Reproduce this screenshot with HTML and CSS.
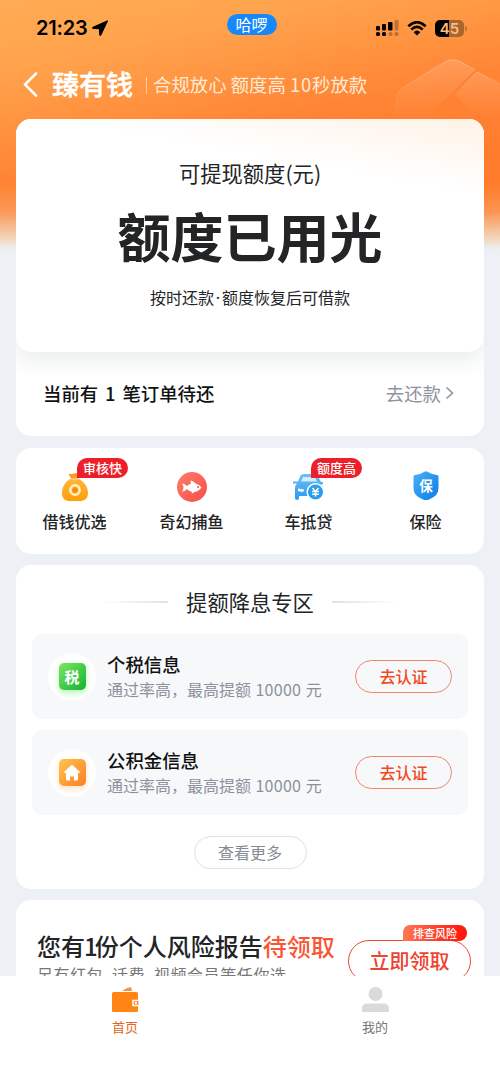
FILE: index.html
```html
<!DOCTYPE html>
<html lang="zh-CN">
<head>
<meta charset="utf-8">
<title>臻有钱</title>
<link rel="stylesheet" href="styles.css">
</head>
<body>
<div class="screen">
  <header class="top">
    <svg class="emblem" width="105" height="64" viewBox="0 0 105 64">
      <defs>
        <linearGradient id="em" x1="0" y1="0" x2="0" y2="1"><stop offset="0" stop-color="#fff" stop-opacity=".16"/><stop offset="1" stop-color="#fff" stop-opacity="0"/></linearGradient>
        <linearGradient id="edge" x1="0" y1="0" x2="0" y2="1"><stop offset="0" stop-color="#ffc596" stop-opacity=".6"/><stop offset="1" stop-color="#ffc596" stop-opacity="0"/></linearGradient>
      </defs>
      <path d="M0 60V46Q0 33 9 28L48 4Q57-2 66 3L92 17 38 52 31 60Z" fill="none"/>
      <path d="M0 60V46Q0 33 9 28L48 4Q57-2 66 3L80 11 38 52 31 60Z" fill="url(#em)"/>
      <path d="M.5 50Q0 33 9 28L48 4Q57-2 66 3L80 11" fill="none" stroke="url(#edge)"/>
      <path d="M60 35 82 13 105 25V60H82Z" fill="url(#em)"/>
      <path d="M60 35 82 13 105 25" fill="none" stroke="url(#edge)"/>
    </svg>
    <div class="status">
      <div class="clock">21:23
        <svg width="16" height="16" viewBox="0 0 16 16"><path d="M15.600.8 1 7.200c-.8.4-.6 1.300.2 1.300l6.200.2.2 6.100c0 .9.9 1 1.300.2Z" fill="#000" stroke="#000"/></svg>
      </div>
      <div class="island">哈啰</div>
      <div class="signals">
        <svg width="23" height="16" viewBox="0 0 23 16">
          <g><rect x="0" y="6" width="4" height="4.500" rx="1"/><rect x="6" y="4" width="4" height="6.500" rx="1"/><rect x="12" y="2" width="4.500" height="8.500" rx="1"/><rect x="18.500" y="0" width="4" height="10.500" rx="1" opacity=".25"/></g>
          <rect x="0" y="12" width="4" height="4" rx="1.500"/><rect x="6" y="12" width="4" height="4" rx="1.500"/><rect x="12.500" y="12" width="4" height="4" rx="1.500" opacity=".25"/><rect x="18.500" y="12" width="4" height="4" rx="1.500" opacity=".25"/>
        </svg>
        <svg class="wifi" width="20" height="15" viewBox="0 0 20 15"><path d="M1.300 5.300Q10-3 18.700 5.300M4.300 8.600Q10 3.200 15.700 8.600" fill="none" stroke="#000" stroke-width="2.600"/><path d="M6.700 11.200Q10 8 13.300 11.200L10 14.600Z"/></svg>
        <div class="battery">45</div><i class="battery-tip"></i>
      </div>
    </div>
    <div class="brand">
      <svg class="back" width="15" height="25" viewBox="0 0 15 25"><path d="M13 1.500 2 12.500 13 23.500" fill="none" stroke="#fff" stroke-width="2.500" stroke-linecap="round"/></svg>
      <h1>臻有钱</h1>
      <i class="rule"></i>
      <span class="slogan">合规放心 额度高 <span class="ten">10</span>秒放款</span>
    </div>
  </header>

  <main class="content">
    <section class="card quota">
      <div class="quota-main">
        <div class="quota-label">可提现额度(元)</div>
        <div class="quota-value">额度已用光</div>
        <div class="quota-note">按时还款<span class="dot">·</span>额度恢复后可借款</div>
      </div>
      <div class="orders">
        <span class="orders-text">当前有 <span class="count">1</span> 笔订单待还</span>
        <span class="repay">去还款<svg width="9" height="14" viewBox="0 0 9 14"><path d="M1.500 1.500 7.500 7 1.500 12.500" fill="none" stroke="#8d949d" stroke-width="1.600"/></svg></span>
      </div>
    </section>

    <nav class="card menu">
      <a class="entry">
        <svg width="32" height="32" viewBox="0 0 32 32">
          <defs><linearGradient id="bag" x1="0" y1="0" x2="0" y2="1"><stop offset="0" stop-color="#ffb53a"/><stop offset="1" stop-color="#ff9f0a"/></linearGradient></defs>
          <path d="M9.500 2.500q3 1 5 0 4-1 6 1l-2 5h-6Z" fill="#f79a26"/>
          <path d="M11 8h9c5 2.500 9 8 9 14 0 6-4 8-8 8H11c-5 0-8-2-8-8 0-6 3-11 8-14Z" fill="url(#bag)"/>
          <path d="M12 8h8" stroke="#ffe2a8" stroke-width="1"/>
          <circle cx="16" cy="19" r="4.700" fill="none" stroke="#fff2c8" stroke-width="2.400"/><path d="m16 16 3 3-3 3-3-3Z" fill="#f28c05"/>
        </svg>
        <span>借钱优选</span><b class="tag">审核快</b>
      </a>
      <a class="entry">
        <svg width="32" height="32" viewBox="0 0 32 32">
          <defs><linearGradient id="fish" x1="0" y1="0" x2="1" y2="1"><stop offset="0" stop-color="#ff7c68"/><stop offset="1" stop-color="#f64e4b"/></linearGradient></defs>
          <circle cx="16" cy="16" r="15" fill="url(#fish)"/>
          <path d="M6 12.500q3 0 5 2.500 2-2 4-2.500-.5-2-.5-3 3 .5 5 3 4 1 6 4-3 4-6.500 4.300l-3 1.700q0-1-.5-2-3-.5-4.500-2.500-2 2.500-5 2.500 1.500-2 1.500-4-.2-2-1.500-4Z" fill="#fff"/><circle cx="22" cy="16" r="1" fill="#f7574f"/>
        </svg>
        <span>奇幻捕鱼</span>
      </a>
      <a class="entry">
        <svg width="32" height="32" viewBox="0 0 32 32">
          <defs><linearGradient id="blue" x1="0" y1="0" x2="0" y2="1"><stop offset="0" stop-color="#6fbff6"/><stop offset="1" stop-color="#2a9bf0"/></linearGradient></defs>
          <path d="M7.500 4.500Q8.500 3 11 3h10q2.500 0 3.500 1.500L28 11h2v2h-1.500q1.500 2 1.500 6v6H6v2q0 2-2 2t-2-2V17q0-3 2-4.500H0v-2h5Z" fill="url(#blue)"/>
          <path d="M10 6h12l2 4.500H8Z" fill="#d4ecfc"/><path d="m5 17.500 6 1q0 2.500-2 2.500l-4-1Z" fill="#fff"/>
          <circle cx="22.500" cy="21" r="8.300" fill="#2c9df1" stroke="#fff" stroke-width="1.500"/>
          <path d="m19.500 17 3 3.500 3-3.500M19 20.500h7m-7 2.700h7M22.500 20.500v5" fill="none" stroke="#fff" stroke-width="1.400"/>
        </svg>
        <span>车抵贷</span><b class="tag">额度高</b>
      </a>
      <a class="entry">
        <svg width="32" height="32" viewBox="0 0 32 32">
          <defs><linearGradient id="shield" x1="0" y1="0" x2="1" y2="1"><stop offset="0" stop-color="#4cb0f6"/><stop offset="1" stop-color="#087ee5"/></linearGradient></defs>
          <path d="M14.500.8q1.500-1 3 0 4 2.700 9.500 3.200 1.500 0 1.500 2v11q0 8-9.500 11.500-3 1-6 0Q3.500 25 3.500 17V6q0-2 1.500-2 5.500-.5 9.500-3.200Z" fill="url(#shield)"/>
          <text class="shield-text" x="16" y="20">保</text>
        </svg>
        <span>保险</span>
      </a>
    </nav>

    <section class="card boost">
      <div class="boost-title"><i></i><h2>提额降息专区</h2><i></i></div>
      <div class="item">
        <div class="disc"><div class="tile green">税</div></div>
        <div class="info"><h3>个税信息</h3><p>通过率高，最高提额 <span class="num">10000</span> 元</p></div>
        <button class="verify">去认证</button>
      </div>
      <div class="item">
        <div class="disc"><div class="tile orange"><svg width="18" height="18" viewBox="0 0 18 18"><path d="M8 1.500q1-1 2 0l6.500 6q1 1.500-1 1.500h-.5v6q0 1.500-1.500 1.500H11v-4H7v4H4.500Q3 16.500 3 15V9h-.5q-2 0-1-1.500Z" fill="#fff"/></svg></div></div>
        <div class="info"><h3>公积金信息</h3><p>通过率高，最高提额 <span class="num">10000</span> 元</p></div>
        <button class="verify">去认证</button>
      </div>
      <button class="more">查看更多</button>
    </section>

    <section class="card promo">
      <div class="promo-text"><h2>您有<span class="one">1</span>份个人风险报告<em>待领取</em></h2><p>另有红包、话费、视频会员等任你选</p></div>
      <button class="claim">立即领取<b>排查风险</b></button>
    </section>
  </main>

  <footer class="tabs">
    <a class="tab active">
      <svg width="28" height="28" viewBox="0 0 28 28"><path d="M11 5q5-3.500 9-4l1 4Z" fill="#f59345"/><rect x="1" y="6" width="26" height="20" rx="1.500" fill="#ff8615"/><path d="M27.500 14.500H22v5h5.500" fill="#ff8615" stroke="#fff" stroke-width="1.500"/><rect x="24" y="16" width="2" height="2" fill="#fff"/></svg>
      <span>首页</span>
    </a>
    <a class="tab">
      <svg width="28" height="28" viewBox="0 0 28 28"><circle cx="14.500" cy="8" r="7" fill="#d9dada"/><path d="M1 26v-3q0-5.500 5.500-5.500h16q5.500 0 5.500 5.500v3Z" fill="#d9dada"/></svg>
      <span>我的</span>
    </a>
  </footer>
</div>
</body>
</html>
```
FILE: styles.css
```css
* { box-sizing: border-box; }
body { margin: 0; background: #edf1f5; font-family: "Noto Sans CJK SC", sans-serif; color: #222426; }
h1, h2, h3, p { margin: 0; font-weight: 400; }
svg { display: block; flex: none; }
button { font-family: inherit; padding: 0; background: none; }
.screen {
  width: 500px; height: 1082px; overflow: hidden;
  display: flex; flex-direction: column;
  background: linear-gradient(180deg, rgba(237,241,245,0) 185px, rgba(240,225,200,.25) 212px, rgba(240,228,212,.85) 238px, #edf1f5 250px), linear-gradient(168deg, #ffab55 0, #ffa34c 70px, #ff8435 175px, #ff7c2d 250px) #edf1f5;
}
.top { position: relative; height: 119px; flex: none; }
.emblem { position: absolute; left: 395px; top: 59px; }
.status { display: grid; grid-template-columns: 1fr 48px 1fr; align-items: center; height: 56px; padding: 0 33px 0 36px; }
.clock { display: flex; align-items: center; gap: 5px; font: 600 20px/24px Inter, sans-serif; color: #000; letter-spacing: -.2px; }
.island { height: 21px; border-radius: 11px; background: #1688fa; color: #fff; font-size: 16px; line-height: 20px; text-align: center; margin: -7px -1px 0 -1px; }
.signals { display: flex; justify-content: flex-end; align-items: center; }
.signals > :first-child { margin-right: 1px; }
.wifi { margin: 0 8px 0 7px; }
.battery { width: 29px; height: 17px; border-radius: 5px; background: linear-gradient(90deg, #000 14px, #a7672f 14px); color: #ffbc7b; font: 600 15px/17px Inter, sans-serif; text-align: center; }
.battery-tip { width: 2px; height: 5px; margin-left: 1px; border-radius: 0 2px 2px 0; background: #b77438; }
.brand { display: flex; align-items: center; height: 57px; padding-left: 23px; color: #fff; }
.brand h1 { margin: -2px 0 0 14px; font-size: 27px; line-height: 40px; font-weight: 500; -webkit-text-stroke: .5px; }
.rule { width: 1px; height: 17px; margin: 2px 6px 0 13px; background: #ffd0a8; }
.slogan { font-size: 18.400px; line-height: 26px; margin-top: -2px; color: #ffead8; white-space: nowrap; }
.ten { letter-spacing: .8px; }
.content { flex: 1; min-height: 0; overflow: hidden; padding: 0 16px; display: flex; flex-direction: column; gap: 11px; }
.card { flex: none; background: #fff; border-radius: 15px; }
.quota { height: 317px; }
.quota-main {
  height: 233px; border-radius: 15px; text-align: center; padding-top: 38px;
  background: linear-gradient(190deg, #fff2e6 0, rgba(255,255,255,0) 75px) #fff;
  box-shadow: 0 8px 20px rgba(50,65,85,.1); clip-path: inset(0 0 -40px 0);
}
.quota-label { font-size: 21.300px; line-height: 32px; }
.quota-value { font-size: 53px; line-height: 64px; font-weight: 700; margin-top: 14px; }
.quota-note { font-size: 16px; line-height: 24px; margin-top: 18px; }
.dot { display: inline-block; width: 8px; text-align: center; font-family: "Noto Sans", sans-serif; }
.orders { height: 84px; display: flex; align-items: center; justify-content: space-between; padding: 0 30px 2px 27px; }
.orders-text { font-size: 18.400px; color: #111; font-weight: 500; word-spacing: 2px; }
.count { display: inline-block; width: 12px; text-align: center; }
.repay { display: flex; align-items: center; gap: 4px; font-size: 18.400px; color: #8d949d; }
.menu { height: 106px; margin-top: 1px; display: grid; grid-template-columns: repeat(4, 1fr); }
.entry { position: relative; display: flex; flex-direction: column; align-items: center; padding-top: 23px; font-size: 16px; line-height: 24px; font-weight: 500; }
.entry > span { margin-top: 6px; }
.tag { position: absolute; left: 61px; top: 10px; width: 51px; height: 20px; border-radius: 10px 10px 10px 0; background: #ed1f28; color: #fff; font-size: 13px; line-height: 19px; text-align: center; font-weight: 500; }
.shield-text { font-size: 13.500px; font-weight: 700; fill: #fff; text-anchor: middle; }
.boost { height: 324px; padding: 0 16px; display: flex; flex-direction: column; }
.boost-title { height: 69px; padding-top: 5px; display: flex; align-items: center; justify-content: center; gap: 18px; }
.boost-title i { width: 67px; height: 2px; background: linear-gradient(90deg, #fff, #e0e2e4); }
.boost-title i:last-child { transform: scaleX(-1); }
.boost-title h2 { font-size: 21.300px; line-height: 32px; margin-top: -1px; }
.item { height: 85px; margin-bottom: 11px; padding: 0 16px; border-radius: 10px; background: #f7f8fa; display: flex; align-items: center; }
.disc { width: 48px; height: 48px; border-radius: 50%; background: #fff; display: grid; place-items: center; }
.tile { width: 27px; height: 27px; border-radius: 5px; display: grid; place-items: center; color: #fff; font-size: 15px; line-height: 20px; font-weight: 700; }
.green { background: linear-gradient(135deg, #7be85e, #11b236); box-shadow: 0 3px 6px #b6f5b8; }
.orange { background: linear-gradient(135deg, #ffc54d, #ff7d28); box-shadow: 0 3px 6px #ffe2c7; }
.info { margin: -2px 0 0 11px; flex: 1; white-space: nowrap; }
.info h3 { font-size: 18.400px; line-height: 26px; color: #111; font-weight: 500; }
.info p { font-size: 16px; line-height: 24px; color: #8b929c; word-spacing: .8px; }
.num { letter-spacing: .3px; }
.verify { width: 97px; height: 33px; border: 1px solid #ee856e; border-radius: 17px; color: #f04a20; font-size: 16px; line-height: 28px; padding-bottom: 2px; font-weight: 500; }
.more { align-self: center; width: 113px; height: 33px; margin-top: 10px; border: 1px solid #dde0e4; border-radius: 17px; color: #858c96; font-size: 16px; line-height: 28px; padding-bottom: 2px; }
.promo { height: 130px; display: flex; padding: 30px 13px 0 21px; justify-content: space-between; align-items: flex-start; }
.promo-text { white-space: nowrap; }
.promo h2 { font-size: 24px; line-height: 32px; font-weight: 500; }
.one { letter-spacing: -3px; margin-left: -1px; }
.promo em { font-style: normal; color: #fa5635; }
.promo p { font-size: 16px; line-height: 24px; color: #777; letter-spacing: .6px; font-feature-settings: "halt"; }
.claim { position: relative; flex: none; width: 123px; height: 42px; margin-top: 10px; border: 1.500px solid #e94c36; border-radius: 21px; font-size: 20px; line-height: 38px; color: #ed442f; font-weight: 500; }
.claim b { position: absolute; right: 3px; top: -16px; width: 64px; height: 16px; border-radius: 7px 8px 8px 0; background: linear-gradient(100deg, #ff7955, #ff0f05); color: #fff; font-size: 11px; line-height: 16px; font-weight: 500; }
.tabs { height: 106px; flex: none; background: #fff; display: grid; grid-template-columns: 1fr 1fr; }
.tab { display: flex; flex-direction: column; align-items: center; padding-top: 10px; font-size: 13px; line-height: 20px; color: #777; }
.tab span { margin-top: 3px; }
.active { color: #e36522; }
```
